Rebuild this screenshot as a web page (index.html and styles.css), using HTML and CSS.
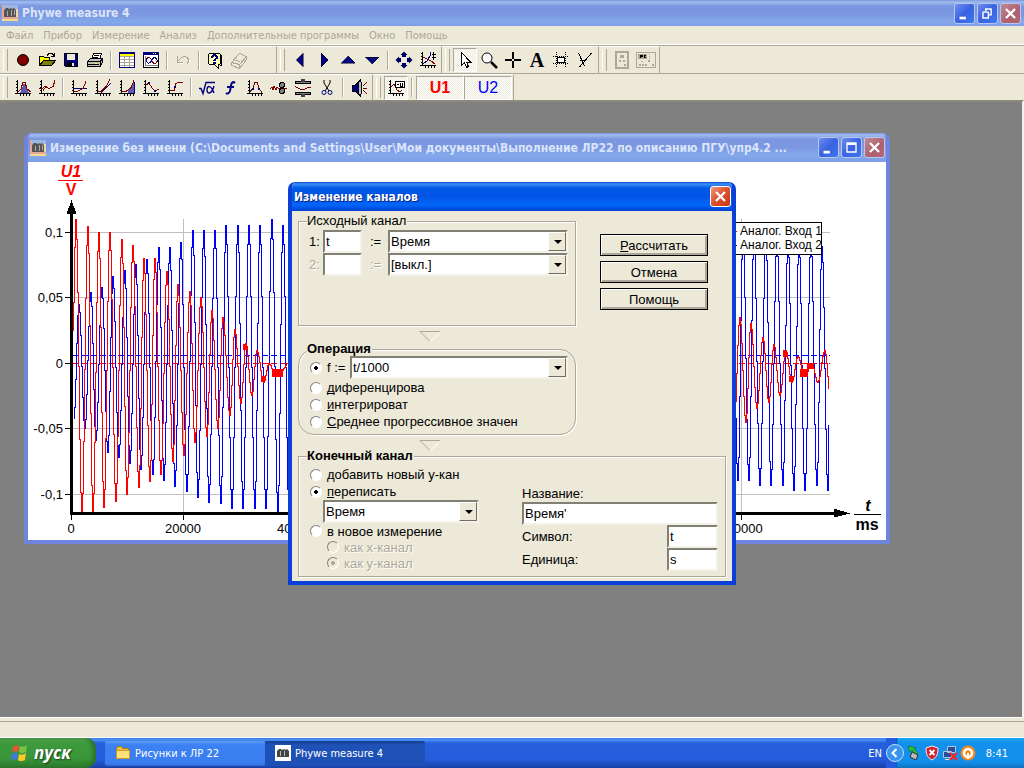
FILE: index.html
```html
<!DOCTYPE html>
<html lang="ru">
<head>
    <meta charset="utf-8">
    <title>Phywe measure 4</title>
    <link rel="stylesheet" href="styles.css">
</head>
<body>
    <svg class="defs" aria-hidden="true">
        <symbol id="logo" viewBox="0 0 16 16">
            <path fill="#efd9a4" d="M0 0h16v16H0z"/>
            <path fill="#9db8e0" d="M0 0h16v4H0z"/>
            <path fill="#e9a79c" d="M0 12h16v2H0zM0 0h2v12H0z"/>
            <path fill="#f0dc8a" d="M0 14h16v2H0z"/>
            <path fill="#555" d="M2 5l2-2h2l1 1 2-1 1 1 2-1 2 2v7H2z"/>
            <path fill="#aaa" d="M5 6h1v5H5zM9 5h1v6H9zM12 5h1v5h-1z"/>
        </symbol>
        <symbol id="axis" viewBox="0 0 18 18">
            <path d="M3.500 1v14M1 14.500h16M2 2.500h1M2 5.500h1M2 8.500h1M2 11.500h1M6.500 15v2M9.500 15v2M12.500 15v2M15.500 15v2" fill="none" stroke="#000"/>
        </symbol>
        <symbol id="min" viewBox="0 0 21 21"><path fill="#fff" d="M5 14h7v3H5z"/></symbol>
        <symbol id="cross" viewBox="0 0 21 21"><path d="M5.500 5.500l10 10m0-10l-10 10" fill="none" stroke="#fff" stroke-width="2.600"/></symbol>
    </svg>

    <header class="titlebar app-title">
        <svg class="logo"><use href="#logo"/></svg>
        <h1 class="title-text">Phywe measure 4</h1>
        <div class="win-buttons">
            <button class="win-btn" aria-label="Свернуть"><svg><use href="#min"/></svg></button>
            <button class="win-btn" aria-label="Восстановить"><svg viewBox="0 0 21 21"><path d="M8 5.500h7M14.500 5v7H12M8.500 5v3M5 9h7M5.500 9v6.500h6V9" fill="none" stroke="#fff" stroke-width="1.600"/></svg></button>
            <button class="win-btn close" aria-label="Закрыть"><svg><use href="#cross"/></svg></button>
        </div>
    </header>

    <nav class="menu">
        <button>Файл</button>
        <button>Прибор</button>
        <button>Измерение</button>
        <button>Анализ</button>
        <button>Дополнительные программы</button>
        <button>Окно</button>
        <button>Помощь</button>
    </nav>

    <div class="toolbar">
        <div class="band band-main">
            <button class="tool" aria-label="Запись"><svg class="smooth" viewBox="0 0 18 18"><circle cx="9" cy="9" r="5.500" fill="#800000" stroke="#000"/></svg></button>
            <button class="tool" aria-label="Открыть"><svg viewBox="0 0 18 18"><path d="M1.500 14.500v-9h4l1 1h5v3" fill="#ff0" stroke="#000"/><path d="M1.500 14.500l4-5h12l-4 5z" fill="#808000" stroke="#000"/><path d="M9 4.500l2-2h3l2 2m0-3v4h-3" fill="none" stroke="#000"/></svg></button>
            <button class="tool" aria-label="Сохранить"><svg viewBox="0 0 18 18"><path d="M2.500 2.500h13v13h-12l-1-1z" fill="#000080" stroke="#000"/><path fill="#ece9d8" d="M5 3h8v6H5zM10 12h2v3h-2z"/><path fill="#000" d="M5 11h5v4H5zM14 3h1v1h-1z"/></svg></button>
            <button class="tool" aria-label="Печать"><svg viewBox="0 0 18 18"><path d="M5.500 8.500l2-6h8l-2 6z" fill="#fff" stroke="#000"/><path d="M8 4.500h5M7 6.500h5" stroke="#000"/><path d="M1.500 10.500l3-3h12v4l-3 4h-12z" fill="#c0c0c0" stroke="#000"/><path d="M1 10.500h13v5M2 13.500h11M14 10.500l3-3" fill="none" stroke="#000"/><path stroke="#ff0" d="M9 12.500h2"/></svg></button>
            <span class="sep"></span>
            <button class="tool" aria-label="Таблица"><svg viewBox="0 0 18 18"><path d="M1.500 1.500h15v15h-15z" fill="#fff" stroke="#000080"/><path fill="#ff0" d="M2 3h14v2H2z"/><path d="M1 2.500h16" stroke="#000080"/><path d="M2 5.500h14M2 8.500h14M2 11.500h14M2 14.500h14M6.500 5v11M11.500 5v11" stroke="#aca899"/></svg></button>
            <button class="tool" aria-label="График"><svg viewBox="0 0 18 18"><path d="M1.500 1.500h15v15h-15z" fill="#fff" stroke="#000"/><path fill="#000080" d="M1 1h16v3H1z"/><path fill="#ff0" d="M11 2h1v1h-1zM13 2h1v1h-1z"/><path d="M3.500 5v10M3 14.500h13" stroke="#808080"/><path d="M4 10c2-6 4-4 6 0s4 3 6-1" fill="none" stroke="#800000"/><path d="M4 7c1 7 4 6 6 2s4-3 6 2" fill="none" stroke="#000080"/></svg></button>
            <span class="sep"></span>
            <button class="tool" aria-label="Отменить" disabled><svg viewBox="0 0 18 18"><path d="M3 5v6h6M3.500 10.500l3-3c3-3 8-2 8 2 0 2-1 3-2 3" fill="none" stroke="#aca899"/><path d="M4 12h5M15.500 9c0 3-1 4-2 4" fill="none" stroke="#fff"/></svg></button>
            <span class="sep"></span>
            <button class="tool" aria-label="Справка"><svg viewBox="0 0 18 18"><path d="M3.500 2.500h10l1 1v9l-1 1h-1v4l-4-4h-5l-1-1v-9z" fill="#ffffb0" stroke="#000"/><path d="M15.500 4v10h-2" fill="none" stroke="#000"/><path d="M6 6.500c0-3 5-3 5 0 0 1-2.500 1.500-2.500 3" fill="none" stroke="#000080" stroke-width="2"/><path fill="#000080" d="M7 10.500h3V13H7z"/></svg></button>
            <button class="tool" aria-label="Книга" disabled><svg viewBox="0 0 18 18"><path d="M1.500 11.500l8-9 7 3-7 8zM1.500 11.500v3l8 3 7-9v-3M9.500 13.500v4M3 8l7 3" fill="none" stroke="#aca899"/></svg></button>
        </div>
        <div class="band">
            <button class="tool" aria-label="Влево"><svg viewBox="0 0 18 18"><path d="M12 2v14L5 9z" fill="#000080" stroke="#000" stroke-width=".5"/></svg></button>
            <button class="tool" aria-label="Вправо"><svg viewBox="0 0 18 18"><path d="M6 2v14l7-7z" fill="#000080" stroke="#000" stroke-width=".5"/></svg></button>
            <button class="tool" aria-label="Вверх"><svg viewBox="0 0 18 18"><path d="M2 12h14L9 5z" fill="#000080" stroke="#000" stroke-width=".5"/></svg></button>
            <button class="tool" aria-label="Вниз"><svg viewBox="0 0 18 18"><path d="M2 6h14l-7 7z" fill="#000080" stroke="#000" stroke-width=".5"/></svg></button>
            <span class="sep"></span>
            <button class="tool" aria-label="Сдвиг"><svg class="smooth" viewBox="0 0 18 18"><path d="M9 .5L12.500 4H11v2H7V4H5.500zM9 17.500l3.500-3.500H11v-2H7v2H5.500zM.5 9L4 5.500V7h2v4H4v1.500zM17.500 9L14 5.500V7h-2v4h2v1.500z" fill="#000060"/></svg></button>
            <button class="tool" aria-label="Масштаб"><svg viewBox="0 0 18 18"><use href="#axis"/><path d="M4 6l4 2 4 2 4 3" fill="none" stroke="#800000"/><path d="M4 13l4-3 3-5V1" fill="none" stroke="#000080"/><path d="M14.500 1v8M12.500 3.500h4M12.500 6.500h4" stroke="#000"/></svg></button>
        </div>
        <div class="band">
            <button class="tool pressed" aria-label="Указатель"><svg viewBox="0 0 18 18"><path d="M5.500 1.500v13l3-3 2 5 2-1-2-4.500h4z" fill="#fff" stroke="#000"/></svg></button>
            <button class="tool" aria-label="Лупа"><svg class="smooth" viewBox="0 0 18 18"><circle cx="7" cy="7" r="5" fill="#fff" stroke="#000"/><path d="M11 11l6 6" stroke="#000" stroke-width="2.500"/></svg></button>
            <button class="tool" aria-label="Крест"><svg viewBox="0 0 18 18"><path d="M1 9h7m2 0h7M9 1v7m0 2v7" stroke="#000" stroke-width="2"/></svg></button>
            <button class="tool tool-letter">A</button>
            <button class="tool" aria-label="Рамка"><svg viewBox="0 0 18 18"><path d="M1 5.500h16M1 12.500h16M4.500 1v16M13.500 1v16" stroke="#000" stroke-dasharray="1 1"/><path d="M5.500 6.500h7v5h-7z" fill="#fff" stroke="#000"/></svg></button>
            <button class="tool" aria-label="Угол"><svg viewBox="0 0 18 18"><path d="M2.500 2l6 13M15.500 2l-12 14M4 9l4 1" fill="none" stroke="#000"/></svg></button>
        </div>
        <div class="band">
            <button class="tool" aria-label="Прибор" disabled><svg viewBox="0 0 18 18"><path d="M3 1h12v16H3z" fill="none" stroke="#aca899" stroke-width="2"/><path fill="#aca899" d="M7 4h4v3H7zM6 9h2v2H6zM10 9h2v2h-2zM11 13h2v2h-2z"/></svg></button>
            <button class="tool" aria-label="Интерфейс" disabled><svg class="wide" viewBox="0 0 20 18"><path d="M.5 1.500h19v15H.5z" fill="none" stroke="#aca899"/><path fill="#aca899" d="M2 3h9v5H2zM13 3h1v1h-1zM13 5h1v1h-1zM13 7h1v1h-1zM5 10h2v1H5zM12 9h2v2h-2zM3 13h2v2H3zM6 13h2v2H6zM9 13h2v2H9zM16 13h2v2h-2z"/><path d="M4.500 7V4h2v1.500h-2M9.500 4.500h-1v2h1" fill="none" stroke="#000"/></svg></button>
        </div>
    </div>

    <div class="toolbar">
        <div class="band">
            <button class="tool" aria-label="Интеграл"><svg viewBox="0 0 18 18"><use href="#axis"/><path d="M6 14l4-10 5 10z" fill="#5a5ab4"/><path d="M4 13l3-3 2-7h2l2 7 4 3" fill="none" stroke="#800000"/></svg></button>
            <button class="tool" aria-label="Сглаживание"><svg viewBox="0 0 18 18"><use href="#axis"/><path d="M1 9.500h3l3-2 4 2 4-2 2-6M5 12l3-5 3 3" fill="none" stroke="#800000"/></svg></button>
            <span class="sep"></span>
            <button class="tool" aria-label="Смещение"><svg viewBox="0 0 18 18"><use href="#axis"/><path d="M4 9.500h13" stroke="#000080"/><path d="M4 12.500h3l6-3 3-7" fill="none" stroke="#800000"/></svg></button>
            <button class="tool" aria-label="Касательная"><svg viewBox="0 0 18 18"><use href="#axis"/><path d="M7 14L17 4" stroke="#000080"/><path d="M4 12.500h3l5-5 4-7" fill="none" stroke="#800000"/></svg></button>
            <button class="tool" aria-label="Площадь"><svg viewBox="0 0 18 18"><use href="#axis"/><path fill="#5a5ab4" d="M10 14V11l3-3 3-5v11z"/><path d="M4 12.500h4l5-4 3-7" fill="none" stroke="#800000"/><path d="M16.500 3v12" stroke="#000080"/></svg></button>
            <button class="tool" aria-label="Экстремум"><svg viewBox="0 0 18 18"><use href="#axis"/><path d="M4 6l3-2 3 5 3 3 4-2" fill="none" stroke="#800000"/><path fill="#000080" d="M6 3h2v2H6zM12 11h2v2h-2z"/></svg></button>
            <button class="tool" aria-label="Уровень"><svg viewBox="0 0 18 18"><use href="#axis"/><path d="M4 11.500h4l2-7 2-1h5" fill="none" stroke="#800000"/><path fill="#000080" d="M8 7h2v2H8z"/></svg></button>
            <span class="sep"></span>
            <button class="tool" aria-label="Корень"><svg class="smooth" viewBox="0 0 18 18"><path d="M1 9.500h2l2 5 3-11h9M16 7c-2 8-7 9-7 4s4-5 7 3" fill="none" stroke="#000080" stroke-width="1.400"/></svg></button>
            <button class="tool" aria-label="Функция"><svg class="smooth" viewBox="0 0 18 18"><path d="M13 4c-2-2-4 0-4 3l-1 5c-1 3-3 3-4 2M5 8h7" fill="none" stroke="#000080" stroke-width="2"/></svg></button>
            <button class="tool" aria-label="Пик"><svg viewBox="0 0 18 18"><use href="#axis"/><path d="M4 13l3-4 2-6h2l2 6 3 5" fill="none" stroke="#800000"/><path fill="#000080" d="M6 9h2v2H6zM12 9h2v2h-2z"/></svg></button>
            <button class="tool" aria-label="Фильтр"><svg viewBox="0 0 18 18"><path d="M0 9.500l2-1 1 2 1-3 2 3 1-2 2 1h8" fill="none" stroke="#800000"/><circle cx="12" cy="6" r="2.500" fill="#808080" stroke="#000"/><circle cx="12" cy="12" r="2.500" fill="#808080" stroke="#000"/></svg></button>
            <button class="tool" aria-label="Сжатие"><svg viewBox="0 0 18 18"><path d="M1 3.500h16M1 14.500h16" stroke="#000" stroke-width="3"/><path d="M2 3.500h14M2 14.500h14" stroke="#808080"/><path fill="#444" d="M7 0h4v3H7zM7 15h4v3H7z"/><path d="M1 8c3-1 4 3 7 3s4-3 9-3" fill="none" stroke="#800000"/></svg></button>
            <button class="tool" aria-label="Вырезать"><svg class="smooth" viewBox="0 0 18 18"><path d="M6 1v3l5 8M12 1v3l-5 8" fill="none" stroke="#000"/><circle cx="6" cy="13.500" r="2" fill="none" stroke="#000080"/><circle cx="12" cy="13.500" r="2" fill="none" stroke="#000080"/></svg></button>
            <span class="sep"></span>
            <button class="tool" aria-label="Звук"><svg viewBox="0 0 18 18"><path d="M2 6h3l5-5v16l-5-5H2z" fill="#000080" stroke="#000"/><ellipse cx="10" cy="9" rx="2" ry="7" fill="#c0c0c0" stroke="#000"/><path d="M13 7l4-4M13 9.500h4M13 11l4 4" stroke="#800000"/></svg></button>
        </div>
        <div class="band">
            <button class="tool pressed" aria-label="Легенда"><svg viewBox="0 0 18 18"><use href="#axis"/><path d="M4 8l3-3 3 6 3 2 2-2" fill="none" stroke="#800000"/><path d="M8.500 2.500h9v6h-9z" fill="#fff" stroke="#000"/><path d="M10 5.500h2M13.500 4v3h2V4" fill="none" stroke="#000"/></svg></button>
            <span class="sep"></span>
            <button class="channel pressed u1">U1</button>
            <button class="channel pressed u2">U2</button>
        </div>
    </div>

    <main class="workspace">
        <section class="window plot-window">
            <div class="titlebar">
                <svg class="logo"><use href="#logo"/></svg>
                <h2 class="title-text">Измерение без имени (C:\Documents and Settings\User\Мои документы\Выполнение ЛР22 по описанию ПГУ\упр4.2 ...</h2>
                <div class="win-buttons">
                    <button class="win-btn" aria-label="Свернуть"><svg><use href="#min"/></svg></button>
                    <button class="win-btn" aria-label="Развернуть"><svg viewBox="0 0 21 21"><path d="M5.500 5.500h10v10h-10zM5 7h11" fill="none" stroke="#fff" stroke-width="1.500"/></svg></button>
                    <button class="win-btn close" aria-label="Закрыть"><svg><use href="#cross"/></svg></button>
                </div>
            </div>
            <svg class="plot" viewBox="28 162 858 378">
                <path class="grid" d="M72 232.500H830M72 297.500H830M72 428.500H830M72 494.500H830M183.500 219V513M295.500 219V513M406.500 219V513M518.500 219V513M630.500 219V513M741.500 219V513"/>
                <path class="mean blue" d="M73 355.500H830"/>
                <path class="mean red" d="M73 363.500H830"/>
                <polyline id="blueLeft" class="curve blue"/>
                <polyline id="redLeft" class="curve red"/>
                <polyline id="blueRight" class="curve blue"/>
                <polyline id="redRight" class="curve red"/>
                <path fill="#f00" d="M272 369h11v8h-11zM800 369h8v8h-8zM807 363h7v6h-7zM783 350h4v7h-4zM789 376h4v6h-4zM243 344h4v6h-4zM261 376h4v6h-4z"/>
                <path class="axes" d="M71.500 210V513.500H836"/>
                <path d="M71.500 200l5 14h-10zM850 513.500l-16-5v9z"/>
                <path class="ticks" d="M65 232.500h6M65 297.500h6M65 363.500h6M65 428.500h6M65 494.500h6M71.500 514v6M183.500 514v6M295.500 514v6M741.500 514v6"/>
                <g class="labels" text-anchor="end">
                    <text x="63" y="237">0,1</text>
                    <text x="63" y="302">0,05</text>
                    <text x="63" y="368">0</text>
                    <text x="63" y="433">-0,05</text>
                    <text x="63" y="499">-0,1</text>
                </g>
                <g class="labels" text-anchor="middle">
                    <text x="71" y="533">0</text>
                    <text x="183" y="533">20000</text>
                    <text x="295" y="533">40000</text>
                    <text x="741" y="533">120000</text>
                </g>
                <g class="unit red-text" text-anchor="middle">
                    <text x="71" y="177" font-style="italic">U1</text>
                    <path d="M58 180h25v1H58z"/>
                    <text x="71" y="195">V</text>
                </g>
                <g class="unit" text-anchor="middle">
                    <text x="868" y="511" font-style="italic">t</text>
                    <path d="M854 514h27v1h-27z"/>
                    <text x="867" y="530">ms</text>
                </g>
                <path d="M700.500 222.500h121v32h-121z" fill="#fff" stroke="#000"/>
                <path d="M725 231.500h12" stroke="#f00"/>
                <path d="M725 245.500h12" stroke="#00f"/>
                <g class="legend">
                    <text x="740" y="235">Аналог. Вход 1</text>
                    <text x="740" y="249">Аналог. Вход 2</text>
                </g>
            </svg>
        </section>

        <form class="window dialog" onsubmit="return false">
            <div class="titlebar active">
                <h2 class="title-text">Изменение каналов</h2>
                <div class="win-buttons">
                    <button type="button" class="win-btn close" aria-label="Закрыть"><svg><use href="#cross"/></svg></button>
                </div>
            </div>
            <div class="dialog-body">
                <div class="top">
                    <div class="left-col">
                        <fieldset class="source">
                            <legend>Исходный канал</legend>
                            <div class="channel-row">
                                <label for="ch1">1:</label>
                                <input type="text" id="ch1" value="t">
                                <label for="src1">:=</label>
                                <span class="combo"><select id="src1"><option>Время</option></select></span>
                            </div>
                            <div class="channel-row">
                                <label for="ch2" class="off">2:</label>
                                <input type="text" id="ch2">
                                <label for="src2" class="off">:=</label>
                                <span class="combo"><select id="src2"><option>[выкл.]</option></select></span>
                            </div>
                        </fieldset>
                        <svg class="flow-arrow" viewBox="0 0 22 12"><path d="M21 .5H1l10 10" fill="none" stroke="#aca899"/><path d="M11 11L21.500 1" fill="none" stroke="#fff"/></svg>
                        <fieldset class="operation">
                            <legend class="bold">Операция</legend>
                            <div class="formula">
                                <label class="radio"><input type="radio" name="op" checked>f :=</label>
                                <span class="combo"><select aria-label="Формула"><option>t/1000</option></select></span>
                            </div>
                            <label class="radio"><input type="radio" name="op"><span><u>д</u>иференцирова</span></label>
                            <label class="radio"><input type="radio" name="op"><span><u>и</u>нтегрироват</span></label>
                            <label class="radio"><input type="radio" name="op"><span><u>С</u>реднее прогрессивное значен</span></label>
                        </fieldset>
                        <svg class="flow-arrow second" viewBox="0 0 22 12"><path d="M21 .5H1l10 10" fill="none" stroke="#aca899"/><path d="M11 11L21.500 1" fill="none" stroke="#fff"/></svg>
                    </div>
                    <div class="actions">
                        <button type="submit"><u>Р</u>ассчитать</button>
                        <button type="button">Отмена</button>
                        <button type="button">Помощь</button>
                    </div>
                </div>
                <fieldset class="target">
                    <legend class="bold">Конечный канал</legend>
                    <div class="target-grid">
                        <div class="target-left">
                            <label class="radio"><input type="radio" name="dest"><span>добавить новый у-кан</span></label>
                            <label class="radio"><input type="radio" name="dest" checked><span><u>п</u>ереписать</span></label>
                            <span class="combo overwrite"><select aria-label="Канал"><option>Время</option></select></span>
                            <label class="radio"><input type="radio" name="dest"><span>в новое измерение</span></label>
                            <label class="radio sub off"><input type="radio" name="axis" disabled><span>как х-канал</span></label>
                            <label class="radio sub off"><input type="radio" name="axis" checked disabled><span>как у-канал</span></label>
                        </div>
                        <div class="target-right">
                            <label for="name">Название:</label>
                            <input type="text" id="name" value="Время'">
                            <div class="short-field"><label for="symbol">Символ:</label><input type="text" id="symbol" value="t"></div>
                            <div class="short-field"><label for="unit">Единица:</label><input type="text" id="unit" value="s"></div>
                        </div>
                    </div>
                </fieldset>
            </div>
        </form>
    </main>

    <div class="statusbar"></div>

    <footer class="taskbar">
        <button class="start">
            <svg viewBox="0 0 20 20"><path fill="#e8542c" d="M3 4c2-2 4-2 6-1L8 9C6 8 4 8 2 10z"/><path fill="#7cc242" d="M10 3c2 1 5 1 7-1l-1 7c-2 1-5 2-7 0z"/><path fill="#3e7be0" d="M2 11c2-1 4-2 6 0l-1 6c-2-1-4-1-6 1z"/><path fill="#fbc928" d="M9 11c2 1 5 1 7-1l-1 7c-2 1-5 2-7 0z"/></svg>
            <span>пуск</span>
        </button>
        <button class="task">
            <svg viewBox="0 0 16 16"><path d="M1.500 3.500l1-2h4l1 2h6v10h-12z" fill="#f0c23c" stroke="#a87b12"/><path d="M1.500 13.500v-8h13v8z" fill="#ffe07a" stroke="#c79a22"/></svg>
            Рисунки к ЛР 22
        </button>
        <button class="task current">
            <svg viewBox="0 0 16 16"><path fill="#fff" d="M0 0h16v16H0z"/><path fill="#444" d="M2 6l2-2h2l1 1 2-1 1 1 2-1 2 2v6H2z"/><path fill="#bbb" d="M5 6h1v5H5zM9 6h1v5H9z"/></svg>
            Phywe measure 4
        </button>
        <span class="lang">EN</span>
        <div class="tray">
            <button class="chevron" aria-label="Показать значки"><svg viewBox="0 0 18 18"><circle cx="9" cy="9" r="8.500" fill="#3a94ee" stroke="#bfe0ff"/><path d="M10.500 5l-4 4 4 4" fill="none" stroke="#fff" stroke-width="2"/></svg></button>
            <svg viewBox="0 0 16 16"><path d="M6 7l6 3-2 5-6-3z" fill="#bbb" stroke="#333"/><path d="M2 1l8 2-2 1 4 4-2 1-4-4-2 2z" fill="#2fc52f" stroke="#0a6a0a" stroke-width=".6"/></svg>
            <svg viewBox="0 0 16 16"><path d="M8 1l6 2c0 6-1 9-6 12C3 12 2 9 2 3z" fill="#d3202c" stroke="#eee"/><path d="M5.500 5l5 5m0-5l-5 5" stroke="#fff" stroke-width="1.800"/></svg>
            <svg viewBox="0 0 16 16"><path d="M5.500 1.500h8v6h-8zM1.500 6.500h8v6h-8z" fill="#2b4d9c" stroke="#b6c4de"/><path d="M3 14.500h6" stroke="#ddd"/><path d="M8 8l7 7m0-7l-7 7" stroke="#f22" stroke-width="2.200"/></svg>
            <svg viewBox="0 0 16 16"><circle cx="8" cy="8" r="7.500" fill="#f58a1f"/><circle cx="8" cy="8" r="4" fill="none" stroke="#fff" stroke-width="2.500"/><path d="M8 8v6" stroke="#fff" stroke-width="2"/></svg>
            <span class="clock">8:41</span>
        </div>
    </footer>
    <script src="script.js"></script>
</body>
</html>
```
FILE: styles.css
```css
* {
    box-sizing: border-box;
}
body {
    margin: 0;
    height: 100vh;
    display: flex;
    flex-direction: column;
    overflow: hidden;
    background-color: #ece9d8;
    font-family: "DejaVu Sans Condensed", "DejaVu Sans", sans-serif;
    font-size: 11px;
    color: #000;
}
button, input, select {
    font: inherit;
    color: inherit;
    margin: 0;
    padding: 0;
    border-radius: 0;
}
button {
    border: none;
    background: none;
}
u {
    text-decoration-skip-ink: none;
}
.defs {
    position: absolute;
    width: 0;
    height: 0;
}

/* title bars */
.titlebar {
    display: flex;
    align-items: center;
    flex: none;
    height: 29px;
    padding: 0 1px 0 2px;
    gap: 4px;
    background: linear-gradient(#7a96df 0, #a2bbee 2px, #7b97e0 6px, #7c97e1 14px, #83a9eb 22px, #7d9ce4 100%);
    color: #dbe5fa;
}
.app-title {
    height: 26px;
    padding-right: 3px;
}
.titlebar.active {
    background: linear-gradient(#0a4bd8 0, #3c8ff5 2px, #0058e6 6px, #0054e3 14px, #0266fb 23px, #0140cf 100%);
    color: #fff;
    text-shadow: 1px 1px #0a1f7a;
}
.logo {
    flex: none;
    width: 16px;
    height: 16px;
}
.title-text {
    flex: 1;
    min-width: 0;
    margin: 0;
    overflow: hidden;
    white-space: nowrap;
    font-family: "DejaVu Sans Condensed", "DejaVu Sans", sans-serif;
    font-size: 12px;
    font-weight: bold;
    line-height: 18px;
}
.win-buttons {
    display: flex;
    flex: none;
    gap: 2px;
}
.win-btn {
    width: 21px;
    height: 21px;
    border: 1px solid #b5c7f0;
    border-radius: 3px;
    background: linear-gradient(135deg, #6c90ee, #3a62e0 50%, #3f78ee);
}
.win-btn.close {
    background: linear-gradient(135deg, #c08896, #b0606e 60%, #b56672);
}
.win-btn svg {
    display: block;
    width: 19px;
    height: 19px;
}
.active .win-btn.close {
    border-color: #fff;
    background: linear-gradient(135deg, #ef9a80, #dc4f2a 50%, #c83c14);
}

/* menu and toolbars */
.menu {
    display: flex;
    flex: none;
    height: 19px;
    padding-left: 1px;
    border-bottom: 1px solid #fff;
}
.menu button {
    padding: 0 5px;
    color: #aca899;
}
.toolbar {
    display: flex;
    flex: none;
    height: 28px;
    border-top: 1px solid #aca899;
}
.toolbar + .toolbar {
    height: 27px;
}
.band {
    position: relative;
    display: flex;
    align-items: center;
    padding: 0 1px 0 11px;
    border-top: 1px solid #fff;
    border-right: 1px solid #aca899;
}
.band::before {
    content: "";
    position: absolute;
    left: 3px;
    top: 2px;
    bottom: 2px;
    width: 3px;
    border-left: 1px solid #fff;
    border-right: 1px solid #aca899;
}
.band-main {
    padding-right: 25px;
}
.tool {
    display: flex;
    align-items: center;
    justify-content: center;
    width: 24px;
    height: 24px;
}
.tool svg {
    flex: none;
    width: 18px;
    height: 18px;
    shape-rendering: crispEdges;
}
.tool svg.smooth {
    shape-rendering: auto;
}
.tool svg.wide {
    width: 20px;
}
.tool-letter {
    font: bold 20px/20px "Liberation Serif", serif;
}
.sep {
    width: 8px;
    height: 19px;
    background: linear-gradient(90deg, transparent 3px, #aca899 3px, #aca899 4px, #fff 4px, #fff 5px, transparent 5px);
}
.pressed {
    border: 1px solid;
    border-color: #aca899 #fff #fff #aca899;
    background: repeating-conic-gradient(#fff 0 25%, #ece9d8 0 50%) 0 0 / 2px 2px;
}
.channel {
    width: 48px;
    height: 24px;
    font: 16px/20px "Liberation Sans", Arial, sans-serif;
}
.u1 {
    font-weight: bold;
    color: #f00;
}
.u2 {
    color: #00f;
}

/* workspace */
.workspace {
    position: relative;
    flex: 1;
    min-height: 0;
    overflow: hidden;
    border-top: 2px solid #8d8a7c;
    border-right: 2px solid #f4f2e8;
    border-bottom: 1px solid #fff;
    background-color: #808080;
}
.window {
    position: absolute;
    border-radius: 7px 7px 0 0;
}
.plot-window {
    left: 24px;
    top: 31px;
    width: 866px;
    border: 4px solid #6f84dc;
    border-top: none;
    overflow: hidden;
}
.plot {
    display: block;
    width: 100%;
    background-color: #fff;
    shape-rendering: crispEdges;
}
.grid, .curve, .mean, .axes {
    fill: none;
}
.grid {
    stroke: #c0c0c0;
}
.blue {
    stroke: #00f;
}
.red {
    stroke: #f00;
}
.mean {
    stroke-dasharray: 6 3;
}
.axes {
    stroke: #000;
    stroke-width: 3px;
}
.ticks {
    stroke: #000;
}
.labels, .legend {
    font: 13px "Liberation Sans", Arial, sans-serif;
}
.legend {
    font-size: 12px;
}
.unit {
    font: bold 16px "Liberation Sans", Arial, sans-serif;
}
.red-text {
    fill: #f00;
}

/* dialog */
.dialog {
    left: 288px;
    top: 80px;
    width: 448px;
    border: 4px solid #0a3fd8;
    border-width: 0 4px 4px;
    background-color: #ece9d8;
    overflow: hidden;
    font-family: "Liberation Sans", Arial, sans-serif;
    font-size: 13px;
}
.dialog-body {
    padding: 3px 6px 4px;
}
.top {
    display: flex;
    gap: 24px;
}
.left-col {
    width: 278px;
}
fieldset {
    min-width: 0;
    margin: 0;
    padding: 0 7px 0 8px;
    border: 1px solid #aca899;
    box-shadow: 1px 1px #fff, inset 1px 1px #fff;
}
legend {
    padding: 0 1px 0 0;
    line-height: 14px;
    background-color: #ece9d8;
}
.bold {
    font-weight: bold;
}
.source {
    padding-bottom: 49px;
}
.operation {
    padding-bottom: 4px;
    border-radius: 16px;
}
.channel-row {
    display: grid;
    grid-template-columns: 14px 39px 26px 1fr;
    align-items: center;
    height: 23px;
    padding-left: 2px;
}
.source legend + .channel-row {
    margin-top: 2px;
}
.channel-row input + label {
    padding-left: 8px;
}
.off {
    color: #aca899;
    text-shadow: 1px 1px #fff;
}
input[type="text"], .combo {
    height: 23px;
    border: 2px solid;
    border-color: #808075 #f4f2e8 #f4f2e8 #808075;
    background-color: #fff;
}
input[type="text"] {
    min-width: 0;
    padding: 0 1px;
}
.combo {
    position: relative;
    display: block;
}
.combo select {
    display: block;
    width: 100%;
    height: 19px;
    padding: 0 17px 0 1px;
    border: none;
    background: none;
    appearance: none;
}
.combo::before {
    content: "";
    position: absolute;
    right: 0;
    top: 0;
    bottom: 0;
    width: 16px;
    border: 1px solid;
    border-color: #fff #716f64 #716f64 #fff;
    background-color: #ece9d8;
    pointer-events: none;
}
.combo::after {
    content: "";
    position: absolute;
    right: 4px;
    top: 8px;
    border: 4px solid transparent;
    border-top-color: #000;
    border-bottom: none;
    pointer-events: none;
}
.flow-arrow {
    display: block;
    width: 22px;
    height: 12px;
    margin: 5px 0 -1px 121px;
}
.flow-arrow.second {
    margin-bottom: -3px;
}
.radio {
    display: flex;
    align-items: center;
    gap: 5px;
    height: 17px;
    padding-left: 3px;
    white-space: nowrap;
}
.radio input {
    flex: none;
    width: 12px;
    height: 12px;
    border: 1px solid;
    border-color: #808080 #fff #fff #808080;
    border-radius: 50%;
    background-color: #fff;
    appearance: none;
}
.radio input:checked {
    background-image: radial-gradient(circle, #000 2px, transparent 2px);
}
.radio input:disabled {
    background-color: #ece9d8;
}
.radio input:disabled:checked {
    background-image: radial-gradient(circle, #aca899 2px, transparent 2px);
}
.formula {
    display: flex;
    align-items: center;
}
.formula .radio {
    width: 43px;
}
.formula .combo {
    flex: 1;
}
.actions {
    display: flex;
    flex-direction: column;
    gap: 5px;
    width: 108px;
    padding-top: 20px;
}
.actions button {
    height: 22px;
    border: 1px solid #000;
    box-shadow: inset 1px 1px #fff, inset -2px -2px #aca899;
}
.target-grid {
    display: grid;
    grid-template-columns: 215px 1fr;
    padding: 3px 0 5px;
}
.overwrite {
    width: 156px;
    margin-left: 16px;
}
.overwrite ~ .radio {
    height: 16px;
}
.radio.sub {
    padding-left: 20px;
}
.target-right {
    display: flex;
    flex-direction: column;
    justify-content: flex-end;
    line-height: 16px;
}
.short-field {
    display: flex;
    align-items: center;
    justify-content: space-between;
}
.short-field input {
    width: 51px;
}

/* status bar and taskbar */
.statusbar {
    flex: none;
    height: 20px;
    border-bottom: 1px solid #fff;
    background: linear-gradient(#ece9d8 3px, #aca899 3px, #aca899 4px, #ece9d8 4px);
}
.taskbar {
    display: flex;
    align-items: center;
    flex: none;
    height: 30px;
    background: linear-gradient(#3a7be8 0, #4a90f0 2px, #2660dc 5px, #245bdb 22px, #1941a5 100%);
    color: #fff;
}
.start {
    display: flex;
    align-items: center;
    gap: 4px;
    width: 96px;
    height: 30px;
    margin-right: 9px;
    padding-left: 10px;
    border-radius: 0 10px 10px 0;
    background: linear-gradient(#5eac56 0, #3c9a3c 5px, #3a963a 20px, #2b7a2b 100%);
    box-shadow: inset -3px 0 4px #2a6e2a;
    font: italic bold 17px/24px "Open Sans", sans-serif;
    text-shadow: 1px 1px 2px #123d12;
}
.start svg {
    width: 20px;
    height: 20px;
}
.task {
    display: flex;
    align-items: center;
    gap: 4px;
    width: 160px;
    height: 25px;
    padding-left: 10px;
    border-radius: 2px;
    background: linear-gradient(#5c9bff, #3c81f3 4px, #3a7df0 90%, #2f66cf);
}
.task.current {
    background: linear-gradient(#153c8e, #1e52b7 4px, #1d50b4);
}
.task svg, .tray > svg {
    width: 16px;
    height: 16px;
}
.lang {
    margin-left: auto;
    margin-right: 4px;
}
.tray {
    display: flex;
    align-items: center;
    gap: 2px;
    width: 138px;
    height: 30px;
    padding-right: 16px;
    background: linear-gradient(90deg, #245bdb 10px, #0b4fae 10px, #1590ea 12px, transparent 12px), linear-gradient(#1aa5f2 0, #1390eb 5px, #1290e9 24px, #0e6fc0 100%);
}
.chevron svg {
    display: block;
    width: 18px;
    height: 18px;
}
.clock {
    margin-left: auto;
}
```
FILE: script.js
```js
// turning points of each curve: [x, y] in plot coordinates
const blueLeft = [
    [73, 418], [78, 304], [84, 428], [90, 292], [95, 440], [101, 287], [107, 452], [112, 276],
    [118, 457], [124, 270], [129, 463], [135, 264], [140, 469], [146, 259], [152, 474], [158, 247],
    [163, 480], [169, 247], [174, 486], [180, 242], [186, 491], [192, 230], [197, 497], [203, 230],
    [208, 502], [214, 230], [220, 503], [225, 225], [231, 508], [237, 225], [242, 508], [248, 225],
    [254, 508], [259, 225], [265, 508], [271, 219], [277, 512], [282, 225], [288, 508], [293, 225]
];
const redLeft = [
    [72, 330], [75, 219], [81, 512], [87, 226], [92, 512], [98, 232], [103, 507], [109, 232],
    [115, 501], [121, 239], [126, 494], [132, 245], [138, 487], [143, 258], [149, 481], [154, 258],
    [160, 474], [166, 271], [172, 461], [177, 284], [183, 455], [189, 291], [194, 442], [200, 297],
    [206, 436], [211, 310], [217, 428], [222, 317], [229, 415], [234, 329], [240, 403], [245, 343],
    [251, 395], [256, 350], [263, 382], [268, 363], [275, 376], [281, 370], [287, 363], [292, 374]
];
const blueRight = [
    [731, 230], [737, 480], [742, 236], [748, 480], [753, 236], [759, 485], [765, 236], [770, 485],
    [776, 240], [782, 485], [787, 240], [793, 490], [798, 240], [804, 490], [810, 240], [816, 485],
    [821, 246], [827, 490], [829, 425]
];
const redRight = [
    [733, 429], [739, 317], [745, 422], [750, 323], [756, 408], [762, 337], [768, 402], [773, 344],
    [779, 395], [785, 350], [791, 382], [797, 356], [804, 376], [811, 363], [817, 382], [824, 350],
    [829, 389]
];

function drawCurve(id, turns) {
    const points = [];
    let last = turns[0][1];
    for (let i = 1; i < turns.length; i++) {
        const [x0, y0] = turns[i - 1];
        const [x1, y1] = turns[i];
        for (let x = x0; x < x1; x++) {
            const k = (1 - Math.cos(Math.PI * (x - x0) / (x1 - x0))) / 2;
            const y = Math.round(y0 + (y1 - y0) * k);
            // every sample is held for one pixel, so the curve is drawn in steps
            points.push(`${x + 0.5},${last}`, `${x + 0.5},${y}`);
            last = y;
        }
    }
    points.push(turns[turns.length - 1].join(','));
    document.getElementById(id).setAttribute('points', points.join(' '));
}

drawCurve('blueLeft', blueLeft);
drawCurve('redLeft', redLeft);
drawCurve('blueRight', blueRight);
drawCurve('redRight', redRight);
```
